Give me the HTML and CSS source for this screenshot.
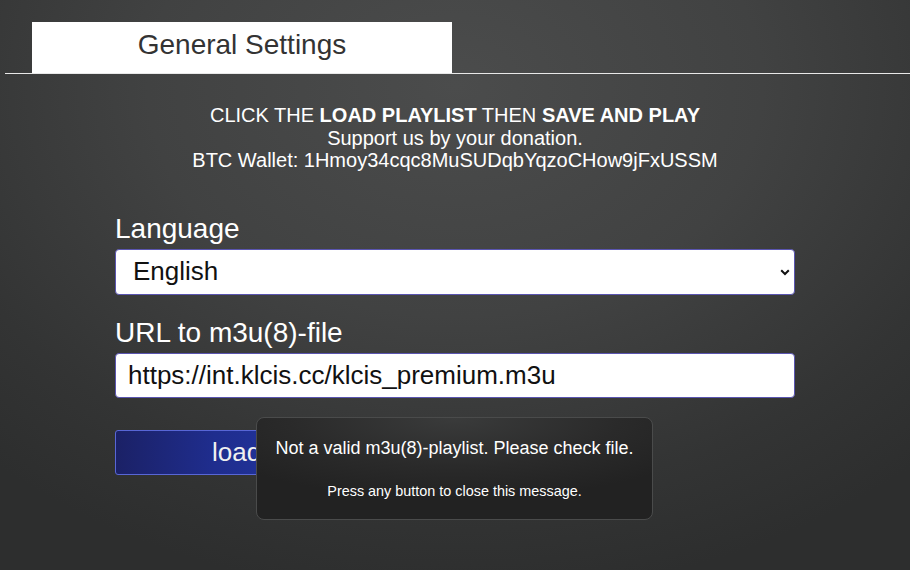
FILE: index.html
```html
<!DOCTYPE html>
<html>
<head>
<meta charset="utf-8">
<link rel="stylesheet" href="styles.css">
</head>
<body>
<div class="page">
  <div class="tabbar">
    <div class="tab">General Settings</div>
  </div>
  <div class="intro">
    <div>CLICK THE <b>LOAD PLAYLIST</b> THEN <b>SAVE AND PLAY</b></div>
    <div>Support us by your donation.</div>
    <div>BTC Wallet: 1Hmoy34cqc8MuSUDqbYqzoCHow9jFxUSSM</div>
  </div>
  <div class="form">
    <label class="label">Language</label>
    <div class="field select">
      <span>English</span>
      <svg class="chev" width="10" height="7" viewBox="0 0 10 7"><path d="M1.2 1.2 L5 5 L8.8 1.2" fill="none" stroke="#111" stroke-width="2"/></svg>
    </div>
    <label class="label second">URL to m3u(8)-file</label>
    <div class="field input">https://int.klcis.cc/klcis_premium.m3u</div>
    <div class="buttons">
      <div class="btn">load playlist</div>
    </div>
  </div>
</div>
<div class="dialog">
  <div class="msg">Not a valid m3u(8)-playlist. Please check file.</div>
  <div class="hint">Press any button to close this message.</div>
</div>
</body>
</html>
```
FILE: styles.css
```css
html, body {
  margin: 0;
  height: 100%;
}
body {
  width: 910px;
  height: 570px;
  overflow: hidden;
  font-family: "Liberation Sans", Arial, sans-serif;
  color: #fff;
  background: radial-gradient(ellipse 75% 90% at 50% 15%, #4b4c4c 0%, #414242 45%, #333434 80%, #2d2e2e 100%);
  position: relative;
}
.page {
  padding-top: 22px;
}
.tabbar {
  margin-left: 5px;
  border-bottom: 1px solid #e8e8e8;
  height: 51px;
}
.tab {
  margin-left: 27px;
  width: 420px;
  height: 51px;
  background: #fff;
  color: #333;
  font-size: 28px;
  line-height: 45px;
  text-align: center;
}
.intro {
  margin-top: 30px;
  text-align: center;
  font-size: 20px;
  line-height: 22.5px;
}
.intro b {
  font-weight: bold;
}
.form {
  width: 680px;
  margin: 40px auto 0;
}
.label {
  display: block;
  font-size: 28px;
  line-height: 34px;
  margin-bottom: 3px;
}
.label.second {
  margin-top: 21px;
}
.field {
  box-sizing: border-box;
  height: 46px;
  background: #fff;
  border: 1px solid #5a55b0;
  border-radius: 4px;
  color: #111;
  font-size: 26px;
  padding-left: 17px;
  display: flex;
  align-items: center;
}
.select {
  justify-content: space-between;
  padding-right: 4px;
}
.chev {
  margin-top: 1px;
}
.input {
  padding-left: 12px;
  height: 45px;
}
.buttons {
  margin-top: 32px;
  display: flex;
}
.btn {
  box-sizing: border-box;
  width: 330px;
  height: 45px;
  border: 1px solid #5866d6;
  border-radius: 3px;
  background: linear-gradient(90deg, #1b2166 0%, #1f2d8e 30%, #2542b5 100%);
  font-size: 26px;
  line-height: 43px;
  text-align: center;
  color: #f0f0f0;
}
.dialog {
  position: absolute;
  left: 256px;
  top: 417px;
  width: 397px;
  height: 103px;
  box-sizing: border-box;
  border: 1px solid #4a4b4b;
  border-radius: 8px;
  background: radial-gradient(ellipse 70% 80% at 50% 0%, #3a3b3b 0%, #2a2a2a 60%, #222 100%);
  text-align: center;
}
.msg {
  margin-top: 19px;
  font-size: 18px;
  line-height: 22px;
}
.hint {
  margin-top: 24px;
  font-size: 14.4px;
  line-height: 16px;
}
```
